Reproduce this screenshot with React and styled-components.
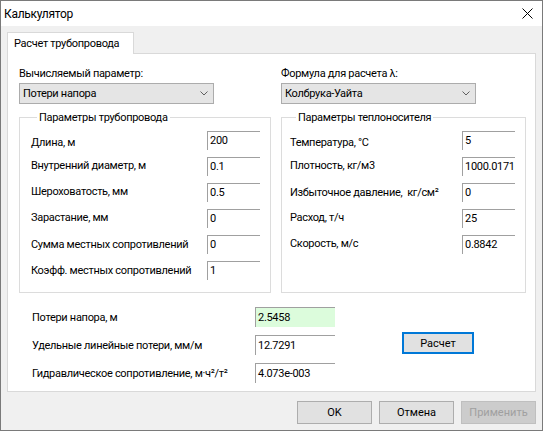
import React from "react";
import styled, { createGlobalStyle } from "styled-components";

const GlobalStyle = createGlobalStyle`
  html, body {
    margin: 0;
    padding: 0;
    background: #ffffff;
  }
  body {
    font-family: Roboto, "Liberation Sans", sans-serif;
    font-size: 11px;
    letter-spacing: -0.3px;
    color: #000;
  }
  * {
    box-sizing: border-box;
  }
`;

const pipeRows = [
  { label: "Длина, м", value: "200", drop: 4 },
  { label: "Внутренний диаметр, м", value: "0.1" },
  { label: "Шероховатость, мм", value: "0.5" },
  { label: "Зарастание, мм", value: "0" },
  { label: "Сумма местных сопротивлений", value: "0", drop: 2 },
  { label: "Коэфф. местных сопротивлений", value: "1", drop: 2 },
];

const fluidRows = [
  { label: "Температура, °С", value: "5", drop: 4 },
  { label: "Плотность, кг/м3", value: "1000.0171" },
  { label: "Избыточное давление,\u00a0 кг/см²", value: "0", drop: 2 },
  { label: "Расход, т/ч", value: "25" },
  { label: "Скорость, м/с", value: "0.8842" },
];

const resultRows = [
  { label: "Потери напора, м", value: "2.5458", good: true },
  { label: "Удельные линейные потери, мм/м", value: "12.7291" },
  { label: "Гидравлическое сопротивление, м·ч²/т²", value: "4.073e-003" },
];

const Chevron = () => (
  <svg width="8" height="5" viewBox="0 0 8 5">
    <polyline points="0.5,0.5 4,4 7.5,0.5" fill="none" stroke="#606060" strokeWidth="1" />
  </svg>
);

const CloseIcon = () => (
  <svg width="11" height="11" viewBox="0 0 11 11">
    <path d="M0.5 0.5 L10.5 10.5 M10.5 0.5 L0.5 10.5" stroke="#000" strokeWidth="1" />
  </svg>
);

const App = () => {
  return (
    <>
      <GlobalStyle />
      <Window>
        <TitleBar>
          <span>Калькулятор</span>
          <CloseIcon />
        </TitleBar>
        <Body>
          <TabStrip>
            <Tab>Расчет трубопровода</Tab>
          </TabStrip>
          <Panel>
            <TopRow>
              <Column>
                <Caption>Вычисляемый параметр:</Caption>
                <Combo>
                  Потери напора
                  <Chevron />
                </Combo>
                <Group pad={11}>
                  <legend>Параметры трубопровода</legend>
                  <FieldGrid>
                    {pipeRows.map((r) => (
                      <React.Fragment key={r.label}>
                        <FieldLabel drop={r.drop}>{r.label}</FieldLabel>
                        <Field>{r.value}</Field>
                      </React.Fragment>
                    ))}
                  </FieldGrid>
                </Group>
              </Column>
              <Column>
                <Caption>Формула для расчета λ:</Caption>
                <Combo>
                  Колбрука-Уайта
                  <Chevron />
                </Combo>
                <Group pad={8}>
                  <legend>Параметры теплоносителя</legend>
                  <FieldGrid>
                    {fluidRows.map((r) => (
                      <React.Fragment key={r.label}>
                        <FieldLabel drop={r.drop}>{r.label}</FieldLabel>
                        <Field>{r.value}</Field>
                      </React.Fragment>
                    ))}
                  </FieldGrid>
                </Group>
              </Column>
            </TopRow>
            <Results>
              <ResultGrid>
                {resultRows.map((r) => (
                  <React.Fragment key={r.label}>
                    <FieldLabel drop={3}>{r.label}</FieldLabel>
                    <ResultField good={r.good}>{r.value}</ResultField>
                  </React.Fragment>
                ))}
              </ResultGrid>
              <CalcButton>Расчет</CalcButton>
            </Results>
          </Panel>
          <Footer>
            <Button>OK</Button>
            <Button>Отмена</Button>
            <Button disabled>Применить</Button>
          </Footer>
        </Body>
      </Window>
    </>
  );
};
export default App;

const Window = styled.div`
  width: 543px;
  height: 431px;
  border: 1px solid #7a7a7a;
  background: #f0f0f0;
  display: flex;
  flex-direction: column;
`;

const TitleBar = styled.div`
  height: 25px;
  background: #ffffff;
  display: flex;
  align-items: center;
  justify-content: space-between;
  padding: 0 9px 0 3px;
  font-size: 12px;
`;

const Body = styled.div`
  flex: 1;
  padding: 6px 6px 0 6px;
  display: flex;
  flex-direction: column;
`;

const TabStrip = styled.div`
  display: flex;
  position: relative;
  z-index: 1;
`;

const Tab = styled.div`
  height: 22px;
  width: 127px;
  margin-bottom: -1px;
  padding-left: 6px;
  display: flex;
  align-items: center;
  white-space: nowrap;
  background: #ffffff;
  border: 1px solid #d9d9d9;
  border-bottom: none;
`;

const Panel = styled.div`
  height: 339px;
  background: #ffffff;
  border: 1px solid #d9d9d9;
  padding: 12px 0 0 11px;
`;

const TopRow = styled.div`
  display: grid;
  grid-template-columns: 252px 245px;
  column-gap: 10px;
`;

const Column = styled.div`
  display: flex;
  flex-direction: column;
`;

const Caption = styled.div`
  line-height: 15px;
  margin-bottom: 2px;
`;

const Combo = styled.div`
  width: 195px;
  height: 21px;
  display: flex;
  align-items: center;
  justify-content: space-between;
  padding: 0 5px 0 3px;
  background: #e5e5e5;
  border: 1px solid #acacac;
  margin-bottom: 6px;
`;

const Group = styled.fieldset`
  margin: 0;
  min-width: 0;
  height: 183px;
  border: 1px solid #dcdcdc;
  padding: 6px 10px 0 ${(p) => p.pad}px;
  legend {
    padding: 0 2px;
    margin-left: 6px;
    line-height: 15px;
  }
`;

const FieldGrid = styled.div`
  display: grid;
  grid-template-columns: minmax(0, 1fr) 53px;
  row-gap: 7px;
`;

const FieldLabel = styled.div`
  line-height: 15px;
  padding-top: ${(p) => p.drop || 1}px;
  white-space: nowrap;
`;

const Field = styled.div`
  height: 19px;
  padding: 1px 0 0 2px;
  line-height: 15px;
  overflow: hidden;
  white-space: nowrap;
  border-top: 1px solid #a0a0a0;
  border-left: 1px solid #a0a0a0;
`;

const Results = styled.div`
  display: flex;
  margin-top: 14px;
  padding-left: 13px;
`;

const ResultGrid = styled.div`
  display: grid;
  grid-template-columns: 223px 80px;
  row-gap: 8px;
`;

const ResultField = styled(Field)`
  height: 20px;
  padding-top: 2px;
  background: ${(p) => (p.good ? "#dcfcdc" : "#ffffff")};
`;

const CalcButton = styled.button`
  margin: 25px 0 0 67px;
  width: 72px;
  height: 22px;
  font: inherit;
  color: #000;
  background: #e1e1e1;
  border: 2px solid #0078d7;
  padding: 0;
`;

const Footer = styled.div`
  display: flex;
  justify-content: flex-end;
  gap: 7px;
  margin-top: 9px;
`;

const Button = styled.button`
  width: 75px;
  height: 23px;
  font: inherit;
  padding: 0;
  color: ${(p) => (p.disabled ? "#a0a0a0" : "#000")};
  background: ${(p) => (p.disabled ? "#cccccc" : "#e1e1e1")};
  border: 1px solid ${(p) => (p.disabled ? "#bfbfbf" : "#adadad")};
`;
